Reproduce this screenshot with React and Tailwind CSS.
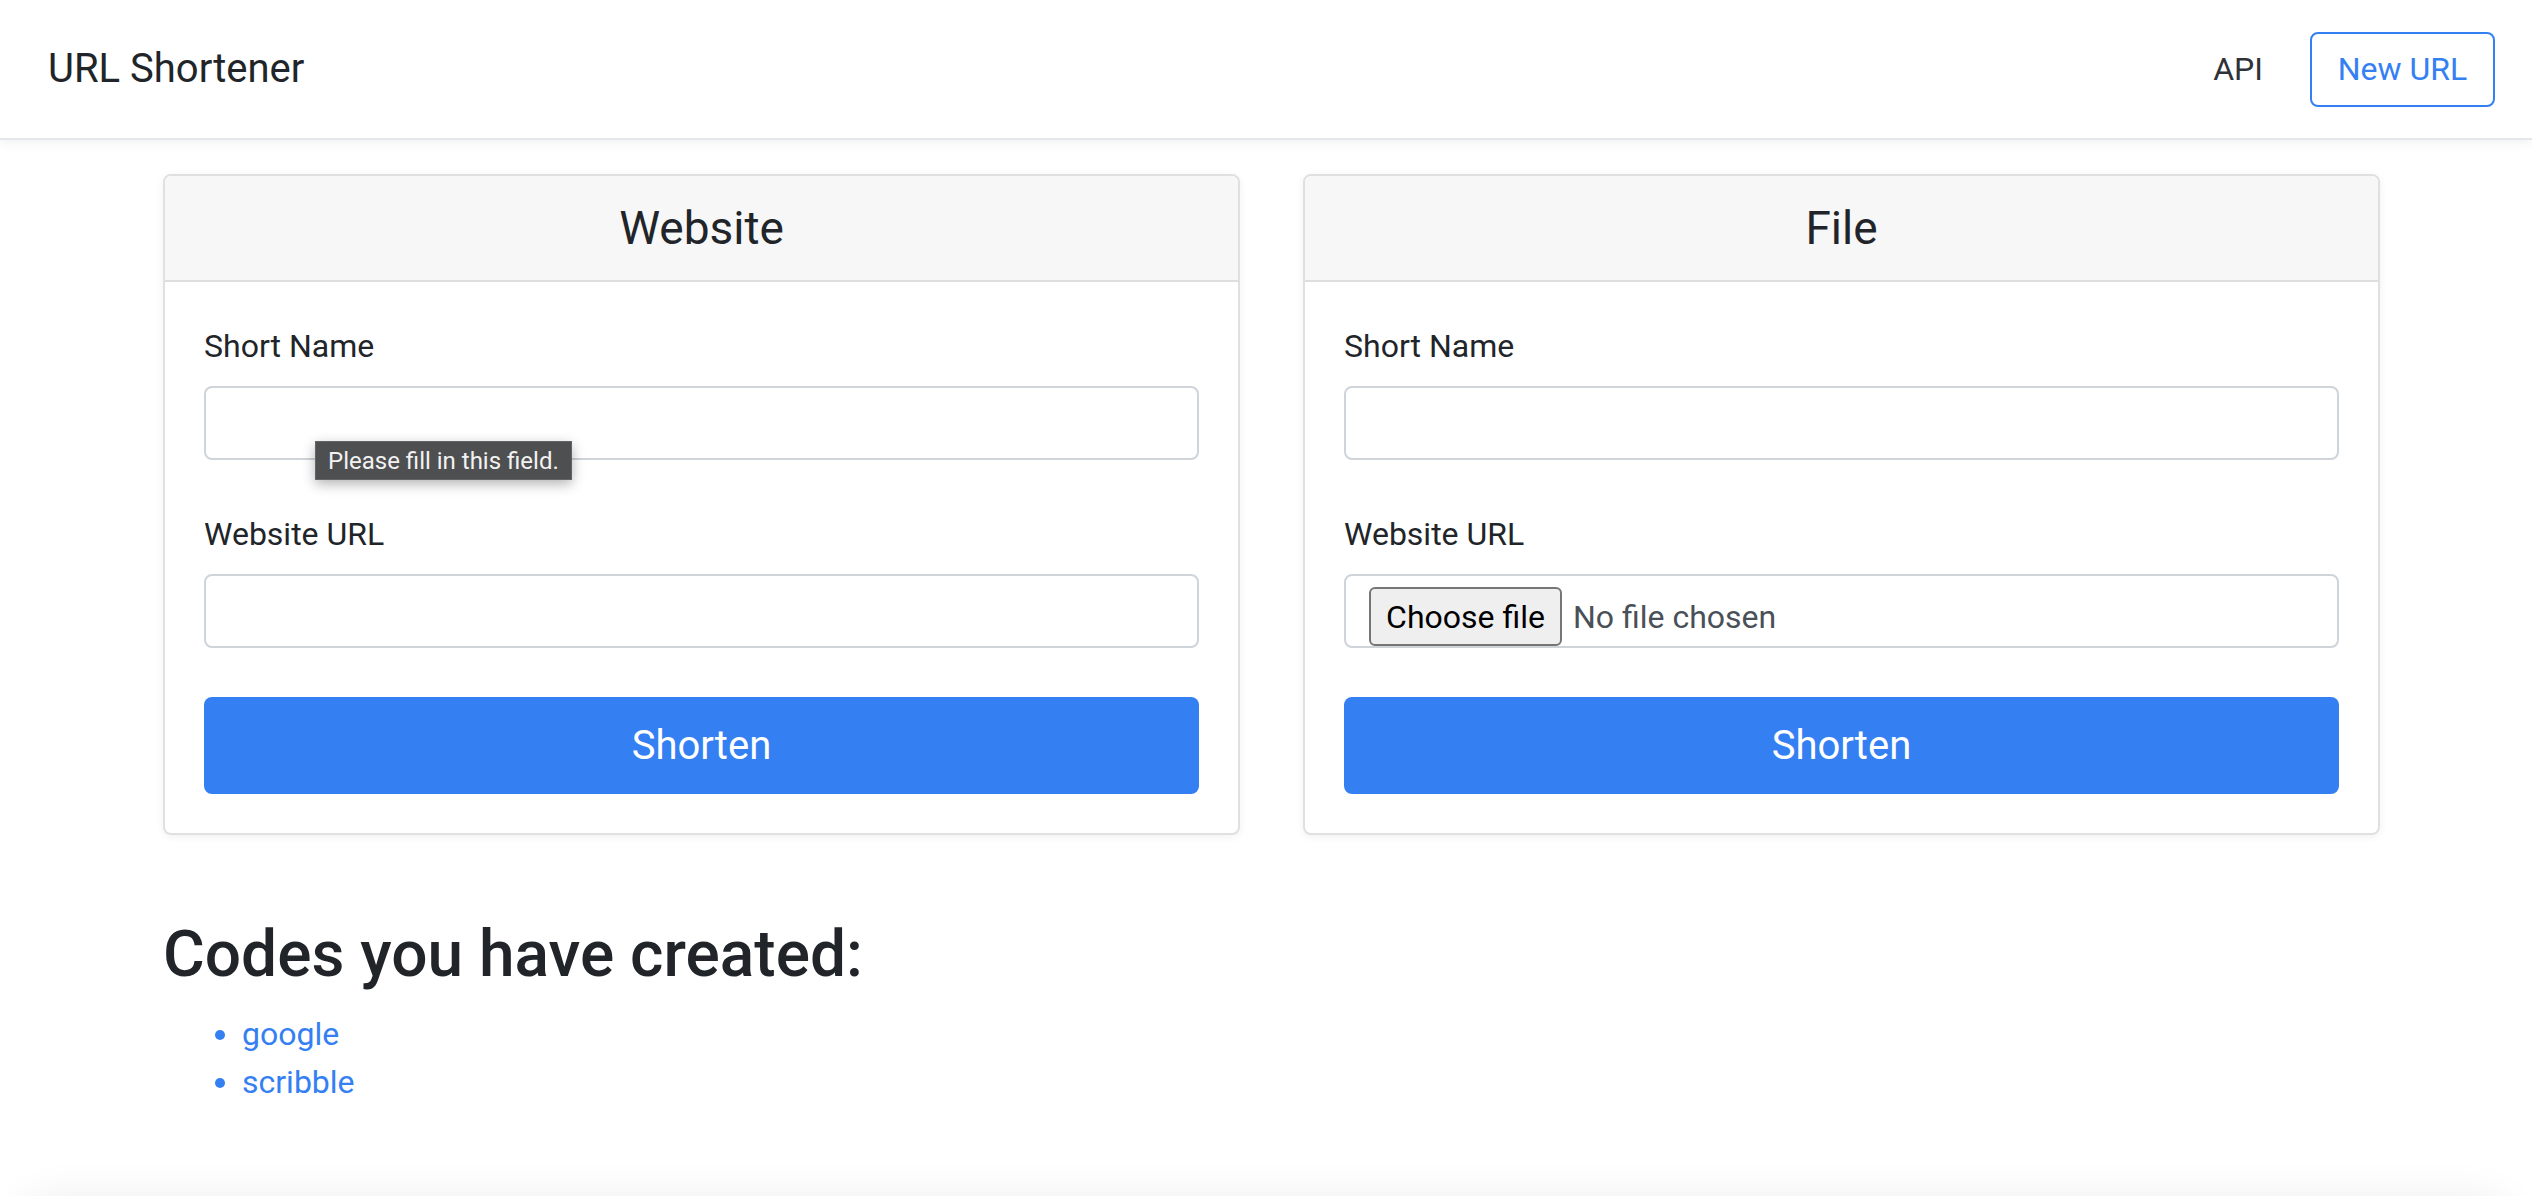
import React from "react";

const BLUE = "text-[#3480f3]";

function Label({ children }) {
  return <div className="h-[48px] leading-[48px] text-[32px] mb-[16px]">{children}</div>;
}

function TextInput({ children }) {
  return (
    <div className="relative h-[74px] border-2 border-[#ced4da] rounded-[8px] bg-white">
      {children}
    </div>
  );
}

function ShortenButton() {
  return (
    <div className="h-[97px] rounded-[8px] bg-[#3480f3] text-white text-[40px] flex items-center justify-center">
      Shorten
    </div>
  );
}

function Card({ title, children }) {
  return (
    <div className="w-[1077px] border-2 border-[#e0e0e0] rounded-[8px] shadow-[0_2px_8px_rgba(0,0,0,0.06)] overflow-hidden bg-white">
      <div className="h-[106px] bg-[#f7f7f7] border-b-2 border-[#dedede] flex items-center justify-center text-[46px] text-[#212529]">
        {title}
      </div>
      <div className="px-[39px] pt-[40px] pb-[39px]">{children}</div>
    </div>
  );
}

export default function App() {
  return (
    <div
      className="bg-white text-[#212529] min-h-screen"
      style={{ fontFamily: "Roboto, 'Liberation Sans', Arial, sans-serif" }}
    >
      <nav className="h-[140px] flex items-center justify-between pl-[48px] pr-[37px] border-b-2 border-[#e3e6ea] shadow-[0_3px_10px_rgba(0,0,0,0.06)]">
        <span className="text-[40px] text-[#212529]">URL Shortener</span>
        <div className="flex items-center">
          <span className="text-[32px] text-[#2f3337] mr-[47px]">API</span>
          <span className="h-[75px] w-[185px] border-2 border-[#3480f3] rounded-[8px] text-[32px] text-[#3480f3] flex items-center justify-center">
            New URL
          </span>
        </div>
      </nav>

      <main className="pl-[163px] pt-[34px]">
        <div className="flex gap-[63px]">
          <Card title="Website">
            <Label>Short Name</Label>
            <TextInput>
              <div className="absolute left-[109px] top-[53px] w-[257px] h-[39px] bg-[#4e4f51] border border-[#636466] shadow-[0_4px_12px_rgba(0,0,0,0.3)] flex items-center pl-[12px] text-[24px] text-[#f2f2f2] z-10">
                Please fill in this field.
              </div>
            </TextInput>
            <div className="h-[50px]" />
            <Label>Website URL</Label>
            <TextInput />
            <div className="h-[49px]" />
            <ShortenButton />
          </Card>
          <Card title="File">
            <Label>Short Name</Label>
            <TextInput />
            <div className="h-[50px]" />
            <Label>Website URL</Label>
            <TextInput>
              <div className="flex items-center pl-[23px] pt-[11px]">
                <div className="h-[59px] w-[193px] bg-[#efefef] border-2 border-[#767676] rounded-[6px] text-[32px] text-black flex items-center justify-center">
                  Choose file
                </div>
                <span className="ml-[11px] text-[32px] text-[#495057]">No file chosen</span>
              </div>
            </TextInput>
            <div className="h-[49px]" />
            <ShortenButton />
          </Card>
        </div>

        <h2 className="mt-[82px] mb-[16px] text-[64px] leading-[1.2] font-medium text-[#212529]">
          Codes you have created:
        </h2>
        <ul className={`list-disc pl-[79px] text-[32px] leading-[48px] ${BLUE}`}>
          <li>google</li>
          <li>scribble</li>
        </ul>
      </main>

      <div className="mt-[90px] mx-[16px] h-[200px] rounded-[40px] bg-white shadow-[0_0_40px_rgba(0,0,0,0.07)]" />
    </div>
  );
}
